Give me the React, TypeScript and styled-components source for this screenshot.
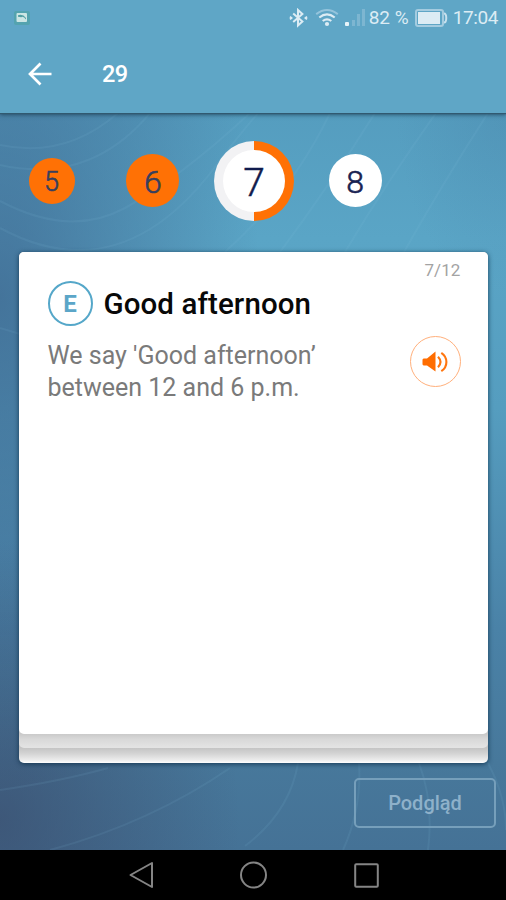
import React from "react";
import styled, { createGlobalStyle } from "styled-components";

const GlobalStyle = createGlobalStyle`
  * { box-sizing: border-box; }
  body { margin: 0; font-family: Roboto, "Liberation Sans", sans-serif; }
  h1, h2, p { margin: 0; }
  button { font-family: inherit; padding: 0; background: none; border: 0; }
  svg { display: block; flex: none; }
`;

const Screen = styled.div`
  width: 506px;
  height: 900px;
  display: flex;
  flex-direction: column;
  overflow: hidden;
`;

const Header = styled.header`
  height: 113px;
  background: #5fa6c6;
  color: #fff;
  position: relative;
  z-index: 1;
  box-shadow: 0 1px 1px #315970, 0 2px 4px rgba(20, 45, 65, 0.6);
`;

const StatusBar = styled.div`
  height: 36px;
  display: flex;
  align-items: center;
  padding: 0 8px 0 14px;
  color: #dcecf4;
  font-size: 19px;
`;

const StatusIcons = styled.div`
  margin-left: auto;
  display: flex;
  align-items: center;
`;

const StatusText = styled.span<{ $gap: number; $spacing: number }>`
  margin-left: ${(p) => p.$gap}px;
  letter-spacing: ${(p) => p.$spacing}px;
  line-height: 36px;
  white-space: nowrap;
`;

const SignalIcon = styled.svg`
  margin-left: 5px;
`;

const BatteryIcon = styled.svg`
  margin-left: 6px;
`;

const WifiIcon = styled.svg`
  margin-left: 7px;
`;

const AppBar = styled.div`
  height: 76px;
  display: flex;
  align-items: center;
  padding-left: 28px;
  gap: 50px;
`;

const ScreenTitle = styled.h1`
  font-size: 23.5px;
  line-height: 28px;
  font-weight: 500;
  letter-spacing: -0.5px;
`;

const Body = styled.main`
  position: relative;
  z-index: 0;
  height: 737px;
  display: flex;
  flex-direction: column;
  background:
    radial-gradient(ellipse 240px 280px at 0 96%, rgba(57, 73, 105, 0.66), transparent),
    radial-gradient(ellipse 260px 500px at 0 25%, rgba(60, 98, 139, 0.72), transparent),
    radial-gradient(ellipse 110px 180px at 100% 0, rgba(70, 125, 163, 0.25), transparent),
    linear-gradient(180deg, #559dbf 0, #5aa5c6 17%, #559dbf 40%, #4a82a7 70%, #47789b 88%, #457296 100%);
`;

const Waves = styled.svg`
  position: absolute;
  inset: 0;
  z-index: -1;
`;

const Steps = styled.nav`
  height: 139px;
  padding-left: 1px;
  display: grid;
  grid-template-columns: repeat(4, 101.2px);
  align-items: center;
  justify-items: center;
  padding-bottom: 4px;
`;

const Step = styled.button<{ $size: number; $done?: boolean }>`
  width: ${(p) => p.$size}px;
  height: ${(p) => p.$size}px;
  border-radius: 50%;
  background: ${(p) => (p.$done ? "#ff7105" : "#fff")};
  color: ${(p) => (p.$done ? "#373f5e" : "#182252")};
  font-size: ${(p) => (p.$size > 50 ? 32 : 27)}px;
  line-height: 1;
  font-weight: 300;
  -webkit-text-stroke: 0.6px currentColor;
  display: flex;
  align-items: center;
  justify-content: center;
  padding-top: ${(p) => (p.$size > 50 ? 2 : 3)}px;
`;

const CurrentStep = styled.button`
  width: 80px;
  height: 80px;
  border-radius: 50%;
  background: conic-gradient(#ff7105 0 50%, #f2f2f4 50% 100%);
  display: flex;
  align-items: center;
  justify-content: center;
`;

const CurrentStepNumber = styled.span`
  width: 62px;
  height: 62px;
  border-radius: 50%;
  background: #fff;
  color: #101b4d;
  font-size: 39px;
  line-height: 66px;
  font-weight: 300;
  -webkit-text-stroke: 0.5px currentColor;
  text-align: center;
`;

const CardStack = styled.section`
  width: 469px;
  height: 511px;
  margin-left: 19px;
  border-radius: 5px;
  background: linear-gradient(#c4c4c4 496px, #d5d5d5 502px, #ececec 508px, #fff 511px);
  box-shadow: 0 1px 5px rgba(12, 45, 70, 0.85);
`;

const SecondCard = styled.div`
  height: 496px;
  border-radius: 5px;
  background: linear-gradient(#cacaca 482px, #d8d8d8 487px, #e4e4e4 496px);
`;

const Card = styled.article`
  height: 482px;
  padding: 6px 27.5px 0 28.5px;
  border-radius: 5px;
  background: #fff;
`;

const Counter = styled.div`
  text-align: right;
  font-size: 17px;
  line-height: 24px;
  letter-spacing: 0.1px;
  color: #a3a3a3;
`;

const Heading = styled.div`
  height: 44px;
  margin-top: -1px;
  display: flex;
  align-items: center;
  gap: 11px;
`;

const Badge = styled.span`
  width: 45px;
  height: 45px;
  flex: none;
  border: 2px solid #55a7c9;
  border-radius: 50%;
  color: #5ba6c8;
  font-size: 24px;
  line-height: 42px;
  font-weight: 700;
  text-align: center;
`;

const Term = styled.h2`
  font-size: 29.5px;
  line-height: 34px;
  font-weight: 500;
  letter-spacing: 0.1px;
  color: #080808;
  padding-top: 1px;
  white-space: nowrap;
`;

const Definition = styled.div`
  display: flex;
  justify-content: space-between;
  align-items: flex-start;
  margin-top: 10px;
`;

const DefinitionText = styled.p`
  padding-top: 4.5px;
  font-size: 25px;
  line-height: 32.5px;
  color: #7a7a7a;
  white-space: nowrap;
`;

const SoundButton = styled.button`
  width: 51px;
  height: 51px;
  margin-top: 1px;
  border: 1.5px solid #ffb07c;
  border-radius: 50%;
  display: flex;
  align-items: center;
  justify-content: center;
`;

const PreviewButton = styled.button`
  width: 142px;
  height: 50px;
  margin: 15px 10px 0 auto;
  border: 2px solid #769fbb;
  border-radius: 5px;
  color: #8eb1ca;
  font-size: 20px;
  font-weight: 500;
`;

const NavBar = styled.footer`
  height: 50px;
  background: #000;
  display: flex;
  align-items: center;
  justify-content: center;
  gap: 86px;
`;

const wavePaths = [
  "M0 32 Q65 46 118 0",
  "M0 52 Q90 72 150 0",
  "M0 88 Q70 125 125 95 T250 0",
  "M0 115 Q120 180 215 54 T290 0",
  "M225 139 Q293 78 330 0",
  "M280 139 Q330 72 375 0",
  "M345 139 Q385 72 436 0",
  "M404 139 Q443 70 488 0",
  "M0 215 L30 224",
  "M0 677 Q62 668 108 655",
  "M50 737 Q150 710 230 655",
  "M245 733 Q290 699 298 650",
  "M343 737 Q362 695 359 650",
  "M428 737 Q434 690 419 650",
  "M488 650 Q506 684 506 717",
];

export default function App() {
  return (
    <>
      <GlobalStyle />
      <Screen>
        <Header>
          <StatusBar>
            <svg width="16" height="14" viewBox="0 0 16 14">
              <rect width="16" height="14" rx="2" fill="#54a3af" />
              <rect x="2.5" y="2" width="10.5" height="9" rx="1" fill="#cce6e4" />
              <path d="M4 4.2Q9 2.8 12 7V8.6Q9.5 4.8 7.2 6.2L4 5.8Z" fill="#519fa3" />
            </svg>
            <StatusIcons>
              <svg width="19" height="20" viewBox="0 0 19 20" fill="none" stroke="#dcecf4" strokeWidth="2">
                <path d="m4.2 5.6 9.2 8-4.4 4V2l4.4 4-9.2 8" />
                <path d="M1 8.6 2.6 10 1 11.4M18 8.6 16.4 10l1.6 1.4" strokeWidth="1.8" />
              </svg>
              <WifiIcon width="24" height="18" viewBox="0 0 24 18" fill="none" stroke="#dcecf4" strokeWidth="2">
                <path d="M1.2 5.1Q12-3 22.8 5.1" stroke="#94c4dc" />
                <path d="M4.3 8.5Q12 2.3 19.7 8.5M7.7 12Q12 8.6 16.3 12" strokeWidth="2.2" />
                <circle cx="12" cy="15" r="2.1" fill="#dcecf4" stroke="none" />
              </WifiIcon>
              <SignalIcon width="22" height="18" viewBox="0 0 22 18">
                <rect x="1" y="13" width="4" height="4" rx="1" fill="#e8f4f9" />
                <path d="M8 11h3v6H8zM13 5h3v12h-3zM18 0h3v17h-3z" fill="#7db6d1" />
              </SignalIcon>
              <StatusText $gap={3} $spacing={0}>82 %</StatusText>
              <BatteryIcon width="33" height="18" viewBox="0 0 33 18">
                <rect x="1" y="1" width="27" height="16" rx="2" fill="none" stroke="#a4cce0" strokeWidth="2" />
                <rect x="3" y="3" width="22" height="12" fill="#dcecf4" />
                <path d="M29 4.5c3 0 3 9 0 9" fill="none" stroke="#c8e1ee" strokeWidth="2" />
              </BatteryIcon>
              <StatusText $gap={5} $spacing={-0.4}>17:04</StatusText>
            </StatusIcons>
          </StatusBar>
          <AppBar>
            <svg width="24" height="24" viewBox="0 0 24 24" fill="none" stroke="#fff" strokeWidth="2.7">
              <path d="M23.5 12H3M12.5 1.5 2 12l10.5 10.5" />
            </svg>
            <ScreenTitle>29</ScreenTitle>
          </AppBar>
        </Header>
        <Body>
          <Waves width="506" height="737" fill="none" stroke="#8cc8df" strokeOpacity="0.1" strokeWidth="2">
            {wavePaths.map((d) => (
              <path key={d} d={d} />
            ))}
          </Waves>
          <Steps>
            <Step $size={46} $done>5</Step>
            <Step $size={53} $done>6</Step>
            <CurrentStep>
              <CurrentStepNumber>7</CurrentStepNumber>
            </CurrentStep>
            <Step $size={53}>8</Step>
          </Steps>
          <CardStack>
            <SecondCard>
              <Card>
                <Counter>7/12</Counter>
                <Heading>
                  <Badge>E</Badge>
                  <Term>Good afternoon</Term>
                </Heading>
                <Definition>
                  <DefinitionText>
                    We say 'Good afternoon’
                    <br />
                    between 12 and 6 p.m.
                  </DefinitionText>
                  <SoundButton aria-label="Play">
                    <svg width="26" height="22" viewBox="0 0 26 22" fill="none" stroke="#ff7610" strokeWidth="2.1">
                      <path d="M.5 8.5 1.5 7.5H5L13.5.5v20L5 14.5H1.5l-1-1z" fill="#ff6d00" stroke="none" />
                      <path d="M16 5.8q5 5.2 0 10.4M19.3 1.8c6.8 4.5 6.8 13.9 0 18.4" />
                    </svg>
                  </SoundButton>
                </Definition>
              </Card>
            </SecondCard>
          </CardStack>
          <PreviewButton>Podgląd</PreviewButton>
        </Body>
        <NavBar>
          <svg width="27" height="28" viewBox="0 0 27 28" fill="none" stroke="#858585" strokeWidth="2">
            <path d="M25 2v24L3.5 14z" strokeLinejoin="round" />
          </svg>
          <svg width="28" height="28" viewBox="0 0 28 28" fill="none" stroke="#858585" strokeWidth="2">
            <circle cx="13.5" cy="14" r="12.5" />
          </svg>
          <svg width="25" height="25" viewBox="0 0 25 25" fill="none" stroke="#858585" strokeWidth="2">
            <rect x="1.2" y="1.2" width="22.6" height="22.6" rx="1" />
          </svg>
        </NavBar>
      </Screen>
    </>
  );
}
